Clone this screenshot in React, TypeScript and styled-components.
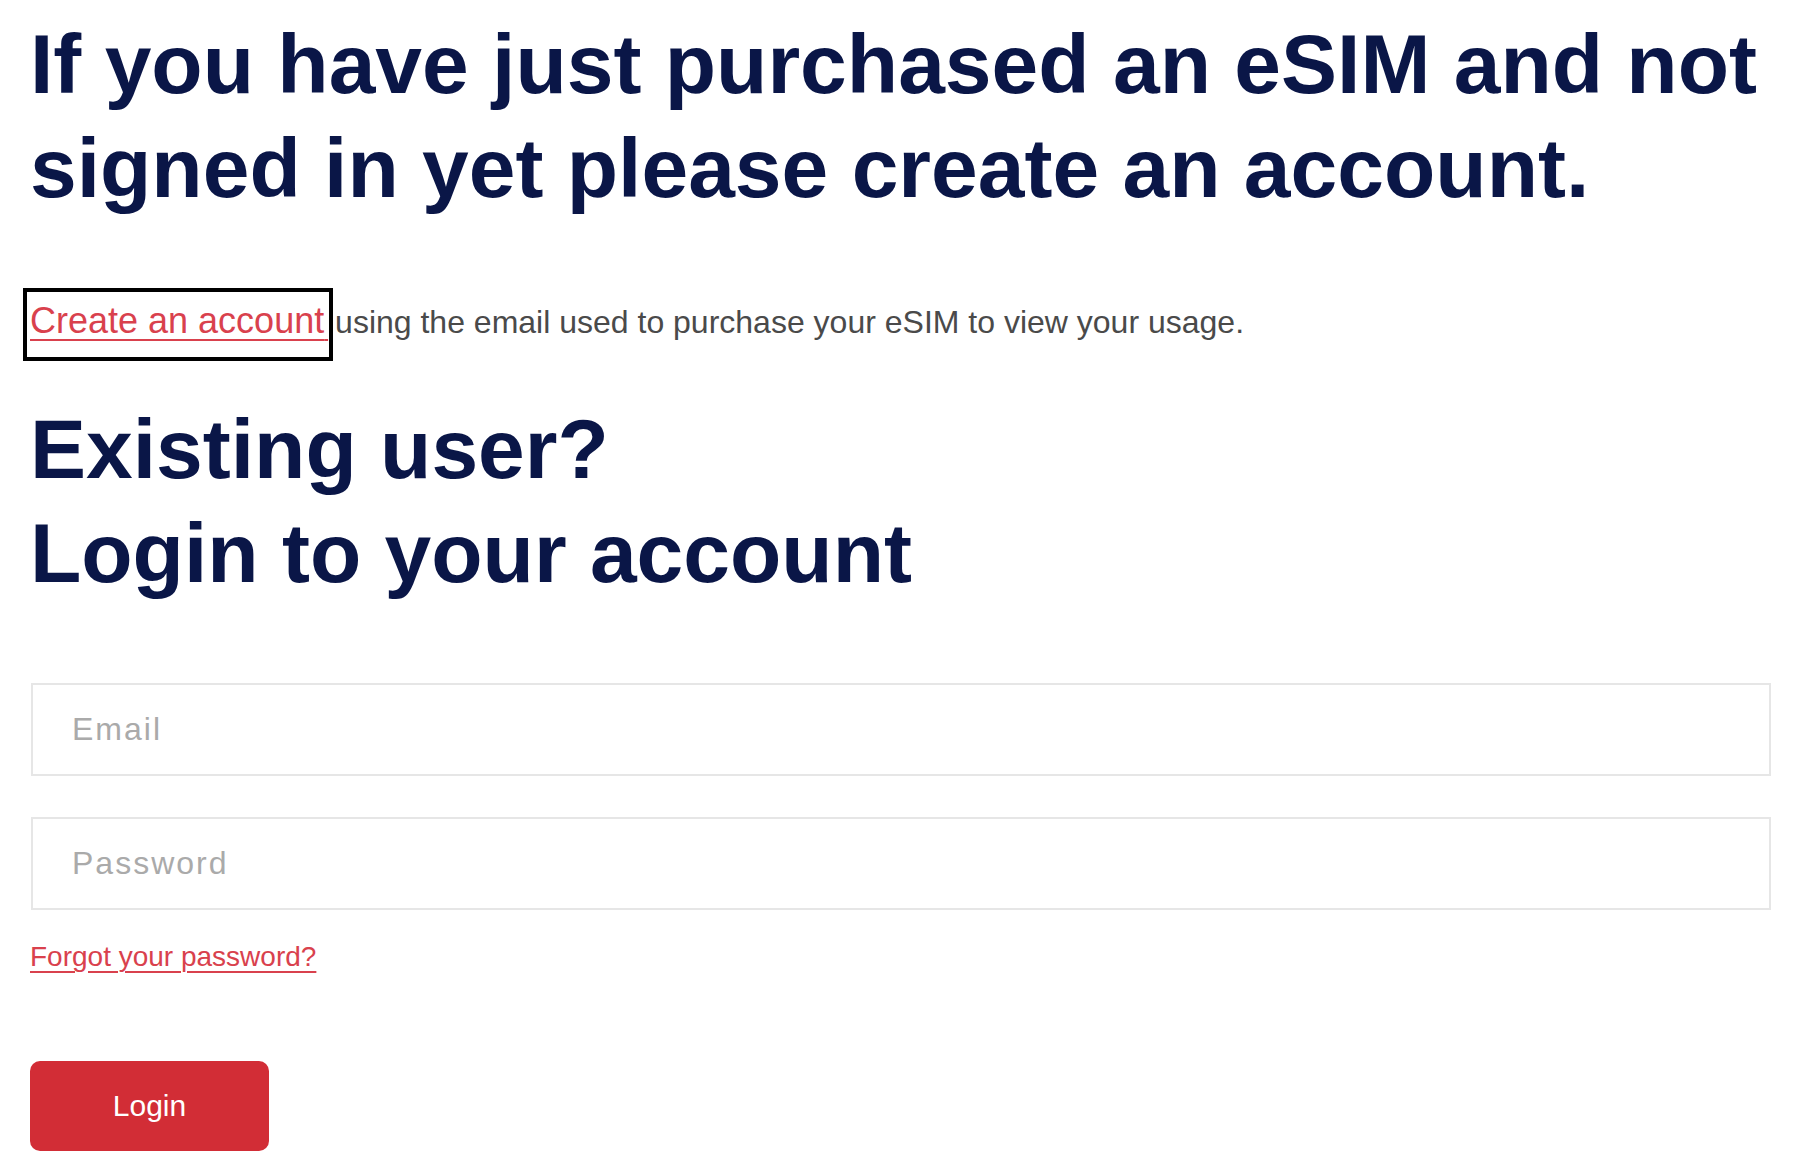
import { createGlobalStyle, styled } from 'styled-components';

const GlobalStyle = createGlobalStyle`
  html, body {
    margin: 0;
    padding: 0;
    background: #ffffff;
  }
  body {
    font-family: 'Liberation Sans', Arial, Helvetica, sans-serif;
  }
  * {
    box-sizing: border-box;
  }
`;

const navy = '#0a1647';
const red = '#d9414d';

const App: React.FC = (): JSX.Element => {
  return (
    <>
      <GlobalStyle />
      <Page>
        <Heading>
          If you have just purchased an eSIM and not signed in yet please create
          an account.
        </Heading>
        <Intro>
          <CreateLink href="#register">
            Create an account
            <TrailingSpace>{'\u00a0'}</TrailingSpace>
          </CreateLink>
          using the email used to purchase your eSIM to view your usage.
        </Intro>
        <SubHeading>
          Existing user?
          <br />
          Login to your account
        </SubHeading>
        <LoginForm onSubmit={(e) => e.preventDefault()}>
          <Field type="email" placeholder="Email" />
          <Field type="password" placeholder="Password" />
          <ForgotLink href="#recover">Forgot your password?</ForgotLink>
          <SubmitButton type="submit">Login</SubmitButton>
        </LoginForm>
      </Page>
    </>
  );
};

const Page = styled.main`
  display: flex;
  flex-direction: column;
  align-items: flex-start;
  padding: 12px 30px 0 30px;
  width: 100%;
`;

const Heading = styled.h1`
  margin: 0;
  font-size: 84px;
  line-height: 104px;
  font-weight: 700;
  color: ${navy};
`;

const SubHeading = styled(Heading).attrs({ as: 'h2' })`
  margin-top: 36px;
`;

const Intro = styled.p`
  margin: 68px 0 0 0;
  font-size: 32px;
  color: #4a4a4a;
`;

const CreateLink = styled.a`
  display: inline-block;
  margin: 0 2px 0 -7px;
  padding: 9px 1px 16px 3px;
  border: 4px solid #000;
  font-size: 36px;
  line-height: 40px;
  color: ${red};
  text-decoration: underline;
  text-underline-offset: 6px;
  text-decoration-thickness: 2px;
`;

const TrailingSpace = styled.span`
  font-size: 14px;
  line-height: 0;
`;

const LoginForm = styled.form`
  display: flex;
  flex-direction: column;
  align-items: flex-start;
  width: 100%;
  margin-top: 78px;
`;

const Field = styled.input`
  width: 100%;
  height: 93px;
  margin: 0 0 41px 1px;
  padding: 0 39px;
  border: 2px solid #e6e6e6;
  border-radius: 0;
  font-family: 'Liberation Sans', Arial, sans-serif;
  font-size: 32px;
  letter-spacing: 2px;
  color: #333;
  outline: none;
  &::placeholder {
    color: #aaaaaa;
  }
`;

const ForgotLink = styled.a`
  margin-top: -10px;
  font-size: 28px;
  line-height: 32px;
  color: ${red};
  text-decoration: underline;
  text-underline-offset: 5px;
  text-decoration-thickness: 2px;
`;

const SubmitButton = styled.button`
  margin-top: 88px;
  width: 239px;
  height: 90px;
  border: none;
  border-radius: 10px;
  background: #d22d36;
  color: #ffffff;
  font-family: 'Liberation Sans', Arial, sans-serif;
  font-size: 30px;
  cursor: pointer;
`;

export default App;
